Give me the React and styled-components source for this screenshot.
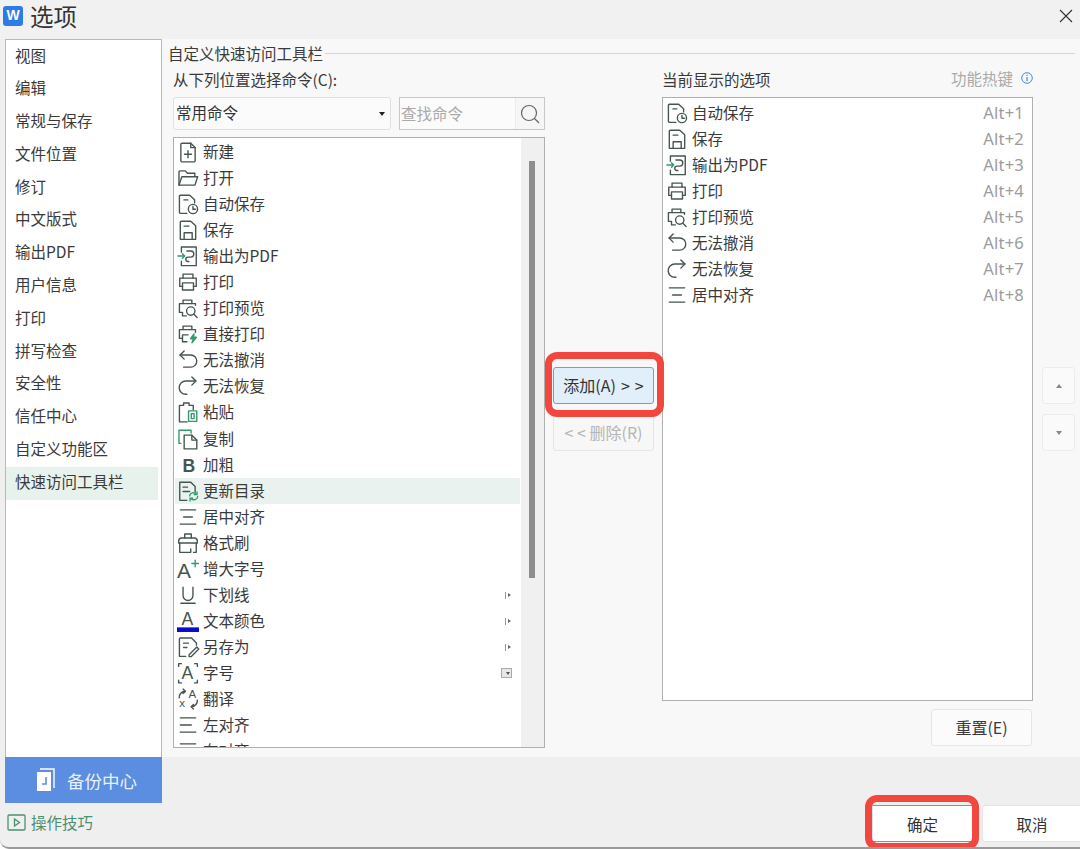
import React from "react";
import styled, { createGlobalStyle } from "styled-components";

const GlobalStyle = createGlobalStyle`
  html, body {
    margin: 0;
    background: #fff;
  }
  * {
    box-sizing: border-box;
  }
`;

const INK = "#45554f";
const GREEN = "#2f9a6c";

const printer = (
  <>
    <path d="M5.5 6.5V2.8h9v3.7" />
    <path d="M5 14H2.5V6.5h15V14H15" />
    <path d="M5 10.8h10v6.5H5z" />
  </>
);

const ICONS = {
  new: (
    <>
      <path d="M3.5 3a1 1 0 0 1 1-1h8l4 4v12a1 1 0 0 1-1 1h-11a1 1 0 0 1-1-1z" />
      <path d="M12.5 2v4h4" />
      <path d="M6.8 12h6.4M10 8.8v6.4" stroke={INK} />
    </>
  ),
  open: (
    <>
      <path d="M1.8 16.5V4.5a1 1 0 0 1 1-1h4.7l2 2.2h6.7v3" />
      <path d="M1.8 16.5l2.6-7.6h14.4l-2.5 7.6z" />
    </>
  ),
  autosave: (
    <>
      <path d="M9 18.5H3.2a1 1 0 0 1-1-1V3a1 1 0 0 1 1-1h8.3l4.5 4.2v2.8" />
      <path d="M6.3 6.3h3.5" />
      <circle cx="14.5" cy="14.5" r="4.2" />
      <path d="M14.5 12.2v2.6h2.3" />
    </>
  ),
  save: (
    <>
      <path d="M3 18.5V3a1 1 0 0 1 1-1h8.5l4.5 4.2v12.3z" />
      <path d="M6.5 6.5h4.3" />
      <path d="M6.5 18.5v-6h7.3v6" />
    </>
  ),
  pdf: (
    <>
      <path d="M4 6.5V1.8h13.5v17H4v-4" />
      <path d="M0.8 10h6M5 8l2 2-2 2" stroke={GREEN} />
      <path d="M9 5.5h3.5a2.5 2.5 0 0 1 0 5.5H10a2 2 0 0 0 0 4h.8" />
    </>
  ),
  print: printer,
  preview: (
    <>
      <path d="M5.5 6V2.8h8V6" />
      <path d="M4.5 14H2.2V6h14.6v1.5" />
      <path d="M5 14v3.2h3.5" />
      <circle cx="12.5" cy="12.8" r="3.8" />
      <path d="M15.3 15.6l3 3" />
    </>
  ),
  direct: (
    <>
      <path d="M5.5 6V2.8h8V6" />
      <path d="M4.5 14H2.2V6h14.6v2.5" />
      <path d="M5 10.8h5M5 10.8v6.2h4" />
      <path d="M15.5 10l-3.2 4.3h2.8l-1.5 3.7 4-5h-2.8z" fill={GREEN} stroke={GREEN} />
    </>
  ),
  undo: (
    <>
      <path d="M6.5 1.8L2.8 5.5l3.7 3.7" />
      <path d="M2.8 5.5h9.7a5.5 5.5 0 0 1 0 11H6" />
    </>
  ),
  redo: (
    <>
      <path d="M13.5 1.8l3.7 3.7-3.7 3.7" />
      <path d="M17.2 5.5H8a6 6 0 0 0-6 6.2 6 6 0 0 0 6 5.8h1" />
    </>
  ),
  paste: (
    <>
      <path d="M5.5 4H2.2v15h7" />
      <path d="M6 4V1.8h5V4" />
      <path d="M11.5 4h3.3v4" />
      <path d="M10.5 9h7.5v9.5h-7.5z" stroke={GREEN} />
      <path d="M13 11.5h2.5v4.5H13z" stroke={GREEN} />
    </>
  ),
  copy: (
    <>
      <path d="M3.5 14H1.8V2h11v2.5" stroke={GREEN} />
      <path d="M6.5 6.5h7l4.5 4.5v8H6.5z" />
      <path d="M13.5 6.5V11H18" />
    </>
  ),
  bold: (
    <text x="5" y="16" fontFamily="Liberation Sans, sans-serif" fontWeight="700" fontSize="16" fill={INK} stroke="none">
      B
    </text>
  ),
  toc: (
    <>
      <path d="M9 18.5H2.5V2h10l4 4v5" />
      <path d="M5.5 6.5h4M5.5 10.5h6" />
      <path d="M11.5 14.5a3.4 3.4 0 0 1 6-1.6M18.8 15a3.4 3.4 0 0 1-6 1.8" stroke={GREEN} />
      <path d="M18.2 10.9v2.4h-2.4M11.9 19v-2.4h2.4" stroke={GREEN} />
    </>
  ),
  center: <path d="M3 3.5h14M6 10h8M3 16.5h14" />,
  left: <path d="M3 3.5h14M3 10h10M3 16.5h14" />,
  painter: (
    <>
      <path d="M7 5.5V1.8h6v3.7" />
      <path d="M1.5 8.5c0-2 1-3 3-3h11c2 0 3 1 3 3V10H1.5z" />
      <path d="M2.5 10v8.5h10v-3M15 18.5h2.5V10" />
    </>
  ),
  grow: (
    <>
      <text x="0" y="18" fontFamily="Liberation Sans, sans-serif" fontSize="19" fill={INK} stroke="none">
        A
      </text>
      <path d="M13.5 5h6M16.5 2v6" stroke={GREEN} />
    </>
  ),
  underline: <path d="M5.5 3v7.5a4.5 4.5 0 0 0 9 0V3M3.5 17.5h13" />,
  color: (
    <>
      <text x="4" y="14" fontFamily="Liberation Sans, sans-serif" fontSize="16" fill={INK} stroke="none">
        A
      </text>
      <rect x="0" y="15.8" width="20" height="4.2" fill="#0a0ad0" stroke="none" />
    </>
  ),
  saveas: (
    <>
      <path d="M8 18.5H2.2V2.8a1 1 0 0 1 1-1h10l4.5 4.5v2" />
      <path d="M6 6.5h4.5M6 10.5h3" />
      <path d="M11 17l7-7 1.8 1.8-7 7H11z" />
    </>
  ),
  size: (
    <>
      <text x="4" y="15" fontFamily="Liberation Sans, sans-serif" fontSize="16" fill={INK} stroke="none">
        A
      </text>
      <path d="M4 1.5H1.5V4M16 1.5h2.5V4M4 19H1.5v-2.5M16 19h2.5v-2.5" />
    </>
  ),
  translate: (
    <>
      <text x="10.5" y="9.5" fontFamily="Liberation Sans, sans-serif" fontSize="10.5" fill={INK} stroke="none">
        A
      </text>
      <text x="2" y="17.5" fontFamily="Liberation Sans, sans-serif" fontSize="10.5" fill={INK} stroke="none">
        x
      </text>
      <path d="M2 9a5.5 5.5 0 0 1 5.5-6M5.5 1l2.2 2-2.2 2M18.5 11a5.5 5.5 0 0 1-5.5 6M15 15l-2.2 2 2.2 2" />
    </>
  ),
};

const COMMANDS = [
  { icon: "new", label: "新建" },
  { icon: "open", label: "打开" },
  { icon: "autosave", label: "自动保存" },
  { icon: "save", label: "保存" },
  { icon: "pdf", label: "输出为PDF" },
  { icon: "print", label: "打印" },
  { icon: "preview", label: "打印预览" },
  { icon: "direct", label: "直接打印" },
  { icon: "undo", label: "无法撤消" },
  { icon: "redo", label: "无法恢复" },
  { icon: "paste", label: "粘贴" },
  { icon: "copy", label: "复制" },
  { icon: "bold", label: "加粗" },
  { icon: "toc", label: "更新目录", active: true },
  { icon: "center", label: "居中对齐" },
  { icon: "painter", label: "格式刷" },
  { icon: "grow", label: "增大字号" },
  { icon: "underline", label: "下划线", more: "arrow" },
  { icon: "color", label: "文本颜色", more: "arrow" },
  { icon: "saveas", label: "另存为", more: "arrow" },
  { icon: "size", label: "字号", more: "box" },
  { icon: "translate", label: "翻译" },
  { icon: "left", label: "左对齐" },
  { icon: "left", label: "右对齐" },
];

const SHOWN = [
  { icon: "autosave", label: "自动保存", key: "Alt+1" },
  { icon: "save", label: "保存", key: "Alt+2" },
  { icon: "pdf", label: "输出为PDF", key: "Alt+3" },
  { icon: "print", label: "打印", key: "Alt+4" },
  { icon: "preview", label: "打印预览", key: "Alt+5" },
  { icon: "undo", label: "无法撤消", key: "Alt+6" },
  { icon: "redo", label: "无法恢复", key: "Alt+7" },
  { icon: "center", label: "居中对齐", key: "Alt+8" },
];

const SECTIONS = [
  "视图",
  "编辑",
  "常规与保存",
  "文件位置",
  "修订",
  "中文版式",
  "输出PDF",
  "用户信息",
  "打印",
  "拼写检查",
  "安全性",
  "信任中心",
  "自定义功能区",
  "快速访问工具栏",
];

function Icon({ name }) {
  return (
    <IconSvg viewBox="0 0 20 20" fill="none" stroke={INK} strokeWidth="1.25" strokeLinejoin="round" strokeLinecap="round">
      {ICONS[name]}
    </IconSvg>
  );
}

export default function App() {
  return (
    <Dialog>
      <GlobalStyle />
      <TitleBar>
        <AppLogo>W</AppLogo>
        <Title>选项</Title>
        <CloseIcon viewBox="0 0 14 14" fill="none" stroke="#333" strokeWidth="1.1">
          <path d="M1 1l12 12M13 1L1 13" />
        </CloseIcon>
      </TitleBar>

      <Body>
        <Side>
          <SideList>
            {SECTIONS.map((s) => (
              <SideItem key={s} $active={s === "快速访问工具栏"}>
                {s}
              </SideItem>
            ))}
          </SideList>
          <BackupButton>
            <svg width="20" height="24" viewBox="0 0 20 24" fill="none">
              <path d="M5 1h14v19" stroke="#fff" strokeWidth="1.4" />
              <path d="M2 4h14v19H2z" fill="#fff" />
              <path d="M11 9v7H7" stroke="#5b8ee0" strokeWidth="1.6" />
            </svg>
            备份中心
          </BackupButton>
          <TipsLink>
            <svg width="19" height="17" viewBox="0 0 19 17" fill="none" stroke="#4c9070" strokeWidth="1.3">
              <rect x="1" y="1" width="17" height="15" rx="1" />
              <path d="M7.5 5v7l5-3.5z" />
            </svg>
            操作技巧
          </TipsLink>
        </Side>

        <Main>
          <Panel>
            <GroupTitle>自定义快速访问工具栏</GroupTitle>
            <Columns>
              <LeftColumn>
                <FieldLabel>从下列位置选择命令(C):</FieldLabel>
                <FilterRow>
                  <SelectBox>
                    常用命令
                    <SelectCaret />
                  </SelectBox>
                  <SearchBox>
                    <SearchText>查找命令</SearchText>
                    <SearchButton>
                      <svg width="22" height="22" viewBox="0 0 22 22" fill="none" stroke="#666" strokeWidth="1.2">
                        <circle cx="10" cy="10" r="7.5" />
                        <path d="M15.5 15.5l4.5 4.5" />
                      </svg>
                    </SearchButton>
                  </SearchBox>
                </FilterRow>
                <CommandList>
                  <CommandRows>
                    {COMMANDS.map((c, i) => (
                      <CommandRow key={i} $active={c.active}>
                        <Icon name={c.icon} />
                        <RowLabel>{c.label}</RowLabel>
                        {c.more === "arrow" && <MoreArrow />}
                        {c.more === "box" && <MoreBox />}
                      </CommandRow>
                    ))}
                  </CommandRows>
                  <ScrollTrack>
                    <ScrollThumb />
                  </ScrollTrack>
                </CommandList>
              </LeftColumn>

              <MiddleColumn>
                <AddButton>添加(A) &gt; &gt;</AddButton>
                <DialogButton disabled>&lt; &lt; 删除(R)</DialogButton>
              </MiddleColumn>

              <RightColumn>
                <RightHead>
                  <FieldLabel>当前显示的选项</FieldLabel>
                  <HotkeyHead>
                    功能热键
                    <svg width="12" height="12" viewBox="0 0 12 12" fill="none">
                      <circle cx="6" cy="6" r="5.3" stroke="#4a86e0" />
                      <path d="M6 5v4M6 2.8v1.2" stroke="#4a86e0" strokeWidth="1.2" />
                    </svg>
                  </HotkeyHead>
                </RightHead>
                <ShownList>
                  {SHOWN.map((c) => (
                    <ShownRow key={c.key}>
                      <Icon name={c.icon} />
                      <RowLabel>{c.label}</RowLabel>
                      <Hotkey>{c.key}</Hotkey>
                    </ShownRow>
                  ))}
                </ShownList>
                <ResetRow>
                  <DialogButton>重置(E)</DialogButton>
                </ResetRow>
              </RightColumn>

              <OrderColumn>
                <OrderButton>
                  <Caret $up />
                </OrderButton>
                <OrderButton>
                  <Caret />
                </OrderButton>
              </OrderColumn>
            </Columns>
          </Panel>

          <Footer>
            <OkButton>确定</OkButton>
            <CancelButton>取消</CancelButton>
          </Footer>
        </Main>
      </Body>
    </Dialog>
  );
}

const Dialog = styled.div`
  width: 1080px;
  height: 849px;
  display: flex;
  flex-direction: column;
  overflow: hidden;
  background: #efefef;
  border-bottom: 2px solid #9a9a9a;
  border-bottom-left-radius: 9px;
  color: #333;
  font-family: "Noto Sans CJK SC", "Noto Sans", sans-serif;
  font-size: 15.5px;
`;

const TitleBar = styled.div`
  height: 39px;
  flex: none;
  display: flex;
  align-items: center;
  padding: 0 7px 8px 3px;
  background: #f1f1f1;
`;

const AppLogo = styled.div`
  width: 20px;
  height: 20px;
  border-radius: 3px;
  background: #2d7be6;
  color: #fff;
  font-family: "Liberation Sans", sans-serif;
  font-weight: 700;
  font-size: 14px;
  line-height: 19px;
  text-align: center;
`;

const Title = styled.div`
  margin-left: 7px;
  font-size: 23.5px;
  line-height: 30px;
  color: #333;
  flex: 1;
`;

const CloseIcon = styled.svg`
  width: 14px;
  height: 14px;
`;

const Body = styled.div`
  flex: 1;
  display: flex;
  min-height: 0;
`;

const Side = styled.div`
  width: 162px;
  flex: none;
  padding-left: 5px;
  display: flex;
  flex-direction: column;
`;

const SideList = styled.div`
  height: 718px;
  flex: none;
  background: #fff;
  border: 1px solid #b9b9b9;
  border-bottom: none;
  padding-top: 0.5px;
`;

const SideItem = styled.div`
  height: 32.8px;
  line-height: 28px;
  padding-left: 9px;
  margin-right: 3px;
  color: #3a3a3a;
  background: ${(p) => (p.$active ? "#e8f2ec" : "transparent")};
`;

const BackupButton = styled.div`
  height: 46px;
  flex: none;
  display: flex;
  align-items: center;
  gap: 12px;
  padding-left: 30px;
  background: #5b8ee0;
  color: #e9f1ff;
  font-size: 17.5px;
`;

const TipsLink = styled.div`
  margin: 8px 0 0 2px;
  display: flex;
  align-items: center;
  gap: 5px;
  color: #4c9070;
  font-size: 15.5px;
  line-height: 22px;
`;

const Main = styled.div`
  flex: 1;
  min-width: 0;
  display: flex;
  flex-direction: column;
`;

const Panel = styled.div`
  height: 718px;
  flex: none;
  background: #f8f8f8;
  padding: 3px 5px 0 6px;
`;

const GroupTitle = styled.div`
  display: flex;
  align-items: center;
  gap: 2px;
  height: 23px;
  line-height: 19px;
  color: #3a3a3a;
  &::after {
    content: "";
    flex: 1;
    height: 1px;
    background: #d5d5d5;
  }
`;

const Columns = styled.div`
  display: flex;
  padding-left: 5px;
`;

const LeftColumn = styled.div`
  width: 372px;
  flex: none;
`;

const FieldLabel = styled.div`
  height: 26px;
  line-height: 28px;
  color: #3a3a3a;
`;

const FilterRow = styled.div`
  display: flex;
  gap: 8px;
  margin-top: 6px;
`;

const SelectBox = styled.div`
  position: relative;
  width: 218px;
  height: 33px;
  line-height: 28px;
  padding-left: 2px;
  background: #fbfbfb;
  border: 1px solid #e0e0e0;
  border-radius: 3px;
`;

const SelectCaret = styled.span`
  position: absolute;
  right: 5px;
  top: 14px;
  border-left: 3.5px solid transparent;
  border-right: 3.5px solid transparent;
  border-top: 4px solid #222;
`;

const SearchBox = styled.div`
  flex: 1;
  height: 33px;
  display: flex;
  align-items: center;
  padding-left: 1px;
  background: #fbfbfb;
  border: 1px solid #c8c8c8;
`;

const SearchText = styled.span`
  flex: 1;
  color: #aaa;
  line-height: 28px;
  margin-top: -2px;
`;

const SearchButton = styled.span`
  width: 29px;
  height: 31px;
  display: flex;
  align-items: center;
  justify-content: center;
  background: #f6f6f6;
  border-left: 1px solid #ececec;
`;

const CommandList = styled.div`
  margin-top: 7px;
  height: 611px;
  display: flex;
  overflow: hidden;
  background: #fff;
  border: 1px solid #b0b0b0;
`;

const CommandRows = styled.div`
  width: 347px;
  flex: none;
  padding: 1px 1px 0 1px;
`;

const rowBase = `
  display: flex;
  align-items: center;
  color: #3a3a3a;
`;

const CommandRow = styled.div`
  ${rowBase}
  position: relative;
  height: 26.05px;
  padding-left: 2px;
  background: ${(p) => (p.$active ? "#e9f2ee" : "transparent")};
`;

const ScrollTrack = styled.div`
  flex: 1;
  background: #f0f0f0;
  padding: 23px 0 0 8px;
`;

const ScrollThumb = styled.div`
  width: 6px;
  height: 417px;
  background: #8e8e8e;
`;

const IconSvg = styled.svg`
  width: 22px;
  height: 22px;
  flex: none;
  overflow: visible;
`;

const RowLabel = styled.span`
  margin-left: 4px;
  line-height: 24px;
  margin-top: -2px;
`;

const MoreArrow = styled.span`
  position: absolute;
  left: 330px;
  top: 10px;
  height: 7px;
  border-left: 1px solid #999;
  &::after {
    content: "";
    position: absolute;
    left: 2px;
    top: 1px;
    border-top: 2.5px solid transparent;
    border-bottom: 2.5px solid transparent;
    border-left: 3px solid #666;
  }
`;

const MoreBox = styled.span`
  position: absolute;
  left: 326px;
  top: 8px;
  width: 11px;
  height: 10px;
  background: #e8e8e8;
  border: 1px solid #aaa;
  &::after {
    content: "";
    position: absolute;
    right: 1px;
    top: 3px;
    border-left: 2px solid transparent;
    border-right: 2px solid transparent;
    border-top: 3px solid #555;
  }
`;

const MiddleColumn = styled.div`
  width: 117px;
  flex: none;
  display: flex;
  flex-direction: column;
  align-items: center;
  gap: 10px;
  padding-top: 302px;
`;

const DialogButton = styled.button`
  width: 101px;
  height: 37px;
  padding: 0 0 2px;
  font: inherit;
  font-size: 16px;
  background: ${(p) => (p.disabled ? "#f7f7f7" : "#fbfbfb")};
  color: ${(p) => (p.disabled ? "#b5b5b5" : "#3a3a3a")};
  border: 1px solid #e6e6e6;
  border-radius: 3px;
`;

const AddButton = styled(DialogButton)`
  position: relative;
  background: #e1effa;
  border-color: #62a6d6;
  color: #333;
  word-spacing: 1.5px;
  &::after {
    content: "";
    position: absolute;
    inset: -16px -11px -14px -9px;
    border: 7px solid #f1473f;
    border-radius: 12px;
  }
`;

const RightColumn = styled.div`
  width: 371px;
  flex: none;
`;

const RightHead = styled.div`
  display: flex;
  justify-content: space-between;
  align-items: center;
`;

const HotkeyHead = styled.div`
  display: flex;
  align-items: center;
  gap: 8px;
  color: #aaa;
  font-size: 15.5px;
`;

const ShownList = styled.div`
  margin-top: 6px;
  height: 604px;
  padding: 2px 0 0 3px;
  background: #fff;
  border: 1px solid #b0b0b0;
`;

const ShownRow = styled.div`
  ${rowBase}
  height: 26px;
`;

const Hotkey = styled.span`
  margin-left: auto;
  margin-right: 8px;
  color: #9c9c9c;
  font-family: "Noto Sans", sans-serif;
  font-size: 16.5px;
  letter-spacing: 0.2px;
  line-height: 22px;
`;

const ResetRow = styled.div`
  margin-top: 8px;
  display: flex;
  justify-content: flex-end;
  padding-right: 1px;
`;

const OrderColumn = styled.div`
  width: 33px;
  margin-left: 9px;
  flex: none;
  display: flex;
  flex-direction: column;
  gap: 10px;
  padding-top: 302px;
`;

const OrderButton = styled.div`
  height: 37px;
  display: flex;
  align-items: center;
  justify-content: center;
  background: #fafafa;
  border: 1px solid #ececec;
  border-radius: 3px;
`;

const Caret = styled.span`
  border-left: 3.5px solid transparent;
  border-right: 3.5px solid transparent;
  ${(p) => (p.$up ? "border-bottom: 4px solid #888;" : "border-top: 4px solid #888;")}
`;

const Footer = styled.div`
  display: flex;
  justify-content: flex-end;
  gap: 10px;
  margin-right: -2px;
  padding-top: 48px;
`;

const OkButton = styled.button`
  position: relative;
  width: 100px;
  height: 37px;
  padding: 0;
  font: inherit;
  color: #333;
  background: #fff;
  border: none;
  border-top: 1px solid #5aa0d8;
  border-bottom: 1px solid #5aa0d8;
  border-left: 1px solid #cfe2f2;
  &::after {
    content: "";
    position: absolute;
    inset: -11px -7px -9px -8px;
    border: 7px solid #f1473f;
    border-radius: 12px;
  }
`;

const CancelButton = styled.button`
  width: 100px;
  height: 37px;
  padding: 0;
  font: inherit;
  color: #333;
  background: #fff;
  border: 1px solid #e4e4e4;
  border-radius: 3px;
`;
